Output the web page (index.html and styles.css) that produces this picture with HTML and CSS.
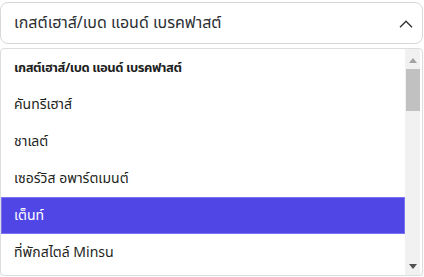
FILE: index.html
```html
<!DOCTYPE html>
<html lang="th">
<head>
<meta charset="utf-8">
<link rel="stylesheet" href="styles.css">
</head>
<body>
<div class="wrap">
  <div class="select">
    <span class="select-text">เกสต์เฮาส์/เบด แอนด์ เบรคฟาสต์</span>
    <svg class="chev" width="14" height="8" viewBox="0 0 14 8"><path d="M1 7.3 L7 1.3 L13 7.3" fill="none" stroke="#333" stroke-width="1.4"/></svg>
  </div>
  <div class="listbox">
    <div class="options">
      <div class="opt group">เกสต์เฮาส์/เบด แอนด์ เบรคฟาสต์</div>
      <div class="opt">คันทรีเฮาส์</div>
      <div class="opt">ชาเลต์</div>
      <div class="opt">เซอร์วิส อพาร์ตเมนต์</div>
      <div class="opt active">เต็นท์</div>
      <div class="opt">ที่พักสไตล์ Minsu</div>
    </div>
    <div class="scrollbar">
      <div class="arrow up"></div>
      <div class="track"><div class="thumb"></div></div>
      <div class="arrow down"></div>
    </div>
  </div>
</div>
</body>
</html>
```
FILE: styles.css
```css
html, body { margin: 0; padding: 0; background: #fff; }
body { font-family: "Noto Sans", "Noto Sans Thai", sans-serif; color: #1f2328; }
.wrap { padding-top: 2px; }
.select {
  height: 40px;
  border: 1px solid #d6d8dc;
  border-radius: 8px;
  display: flex;
  align-items: center;
  justify-content: space-between;
  padding: 0 9px 0 13px;
  margin-right: 1px;
}
.select-text { font-size: 16px; color: #2b2f33; }
.chev { margin-top: 1px; }
.listbox {
  margin-top: 4px;
  height: 226px;
  border: 1px solid #dcdde0;
  border-radius: 4px;
  display: flex;
  overflow: hidden;
  margin-right: 1px;
  box-shadow: 0 1px 1px rgba(220,170,170,0.35);
}
.options { flex: 1; display: flex; flex-direction: column; }
.opt {
  height: 37px;
  flex: none;
  display: flex;
  align-items: center;
  padding-left: 13px;
  font-size: 14px;
  color: #1e1f22;
  box-sizing: border-box;
}
.opt.group { font-weight: 700; font-size: 13px; letter-spacing: -0.45px; }
.opt.active { background: #4f46e5; color: #fff; border: 1px solid #7b74f0; padding-left: 12px; }
.scrollbar { width: 15px; background: #f1f1f1; display: flex; flex-direction: column; margin-right: 2px; }
.arrow { height: 17px; display: flex; align-items: center; justify-content: center; }
.arrow.up { padding-top: 3px; }
.arrow.up::before {
  content: ""; border-left: 4px solid transparent; border-right: 4px solid transparent;
  border-bottom: 5px solid #a3a3a3;
}
.arrow.down::before {
  content: ""; border-left: 4px solid transparent; border-right: 4px solid transparent;
  border-top: 5px solid #505050;
}
.track { flex: 1; padding: 0 0 0 1px; }
.thumb { height: 42px; background: #c1c1c1; }
```
